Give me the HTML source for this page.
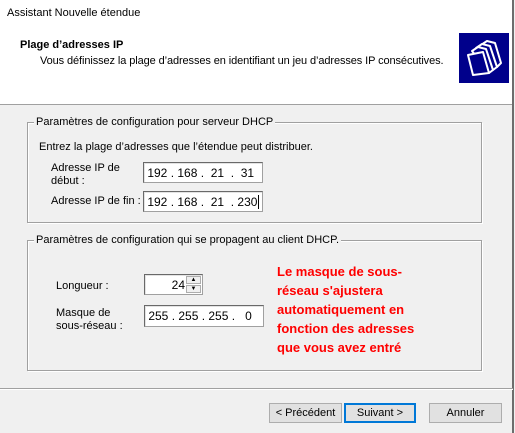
<!DOCTYPE html>
<html><head><meta charset="utf-8"><style>
*{margin:0;padding:0;box-sizing:border-box}
body{width:515px;height:433px;overflow:hidden;background:#f0f0f0;font-family:"Liberation Sans",Arial,sans-serif;font-size:11px;color:#000;position:relative}
.a{position:absolute;white-space:nowrap}
.hdr{position:absolute;left:0;top:0;width:513px;height:105px;background:#fff;border-bottom:1px solid #a0a0a0}
.rb{position:absolute;left:512px;top:0;width:2px;height:433px;background:#6d6d6d}
.grp{position:absolute;border:1px solid #a0a0a0;box-shadow:1px 1px 0 #fff inset,1px 1px 0 #fff}
.lg{position:absolute;background:#f0f0f0;padding:0 2px;top:-7px;left:6px;white-space:nowrap}
.inp{position:absolute;background:#fff;border:1px solid #a0a0a0;border-top-color:#696969;border-left-color:#696969;box-shadow:inset 1px 1px 0 #e3e3e3;font-size:12px;padding-top:3px;white-space:nowrap;overflow:hidden}
.btn{position:absolute;height:20px;background:#e1e1e1;border:1px solid #adadad;text-align:center;line-height:18px}
.red{position:absolute;left:277px;top:262px;color:#ff0000;font-weight:bold;font-size:13px;line-height:19px;white-space:nowrap}
</style></head><body>
<div class="hdr"></div>
<div class="rb"></div>
<div class="a" style="left:7px;top:7px">Assistant Nouvelle étendue</div>
<div class="a" style="left:20px;top:39px;font-weight:bold">Plage d’adresses IP</div>
<div class="a" style="left:40px;top:55px;letter-spacing:-0.1px">Vous définissez la plage d’adresses en identifiant un jeu d’adresses IP consécutives.</div>
<svg class="a" style="left:459px;top:33px" width="50" height="50" viewBox="0 0 50 50">
<rect width="50" height="50" fill="#00008b"/>
<g fill="#00008b" stroke="#fff" stroke-width="2" stroke-linejoin="round">
<path d="M22 12 L28 8 L36 10 L42 30 L38 34 Z"/>
<path d="M17 15 L23 11 L31 13 L38 34 L34 37 Z"/>
<path d="M13 18 L19 14 L27 16 L34 37 L30 40 Z"/>
<path d="M9 22 L24 19 L30 40 L14 42 Z"/>
</g></svg>
<div class="grp" style="left:27px;top:122px;width:455px;height:101px"><div class="lg">Paramètres de configuration pour serveur DHCP</div></div>
<div class="a" style="left:39px;top:141px">Entrez la plage d’adresses que l’étendue peut distribuer.</div>
<div class="a" style="left:51px;top:162px;line-height:13px">Adresse IP de<br>début :</div>
<div class="inp" style="left:143px;top:162px;width:120px;height:21px">&nbsp;192 . 168 . &nbsp;21 &nbsp;. &nbsp;31</div>
<div class="a" style="left:51px;top:195px">Adresse IP de fin :</div>
<div class="inp" style="left:143px;top:191px;width:120px;height:21px">&nbsp;192 . 168 . &nbsp;21 &nbsp;. 230<span style="border-left:1px solid #000;margin-left:1px"></span></div>
<div class="grp" style="left:27px;top:240px;width:455px;height:131px"><div class="lg">Paramètres de configuration qui se propagent au client DHCP.</div></div>
<div class="a" style="left:56px;top:280px">Longueur :</div>
<div class="inp" style="left:144px;top:274px;width:59px;height:21px;text-align:right;padding-right:17px">24</div>
<div class="a" style="left:186px;top:276px;width:15px;height:8px;background:#f0f0f0;border:1px solid #adadad;font-size:6px;line-height:6px;text-align:center">▲</div>
<div class="a" style="left:186px;top:285px;width:15px;height:8px;background:#f0f0f0;border:1px solid #adadad;font-size:6px;line-height:6px;text-align:center">▼</div>
<div class="a" style="left:56px;top:307px;line-height:13px">Masque de<br>sous-réseau :</div>
<div class="inp" style="left:144px;top:305px;width:120px;height:22px">&nbsp;255 . 255 . 255 . &nbsp;&nbsp;0</div>
<div class="red">Le masque de sous-<br>réseau s'ajustera<br>automatiquement en<br>fonction des adresses<br>que vous avez entré</div>
<div class="a" style="left:0;top:388px;width:513px;height:1px;background:#a0a0a0"></div>
<div class="a" style="left:0;top:389px;width:513px;height:1px;background:#fff"></div>
<div class="btn" style="left:269px;top:403px;width:73px">&lt; Précédent</div>
<div class="btn" style="left:344px;top:403px;width:72px;border:2px solid #0078d7;line-height:16px">Suivant &gt;</div>
<div class="btn" style="left:429px;top:403px;width:73px">Annuler</div>
</body></html>
